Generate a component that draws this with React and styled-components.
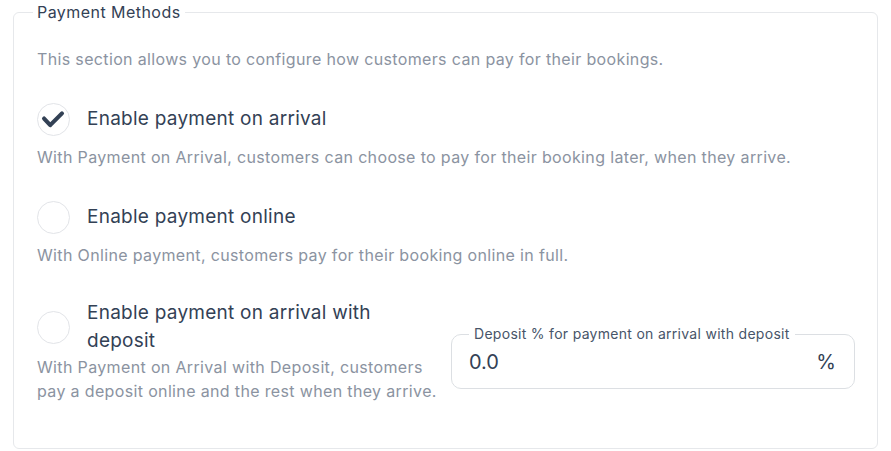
import React from "react";
import styled, { createGlobalStyle } from "styled-components";

const Global = createGlobalStyle`
  html, body { margin: 0; padding: 0; background: #ffffff; }
  body { font-family: Inter, "Noto Sans", sans-serif; color: #334155; }
  * { box-sizing: border-box; }
`;

const Page = styled.div`
  padding: 2px 13px 0;
`;

const Section = styled.fieldset`
  margin: 0;
  padding: 25px 22px 45px 23px;
  border: 1px solid #e6e8eb;
  border-radius: 6px;
  display: flex;
  flex-direction: column;
  gap: 22px;
  min-width: 0;
`;

const SectionLegend = styled.legend`
  font-size: 16px;
  line-height: 20px;
  letter-spacing: 0.45px;
  padding: 0 4px;
  margin-left: -4px;
  color: #334155;
`;

const Description = styled.p`
  margin: 0;
  font-size: 16px;
  line-height: 24px;
  letter-spacing: 0.35px;
  color: #8b93a1;
`;

const Group = styled.div`
  display: flex;
  flex-direction: column;
`;

const OptionRow = styled.label`
  display: flex;
  align-items: center;
  gap: 17px;
  min-height: 52px;
  cursor: pointer;
`;

const Circle = styled.span`
  flex: none;
  width: 33px;
  height: 33px;
  border-radius: 50%;
  border: 1px solid #e2e4e8;
  background: #fff;
  display: flex;
  align-items: center;
  justify-content: center;
`;

const OptionLabel = styled.span`
  font-size: 19px;
  line-height: 28px;
  letter-spacing: 0.25px;
  color: #334155;
  max-width: ${(p) => (p.$narrow ? "330px" : "none")};
`;

const SplitGroup = styled.div`
  display: grid;
  grid-template-columns: 1fr 1fr;
  column-gap: 10px;
  margin-top: 10px;
`;

const LeftCol = styled.div`
  display: flex;
  flex-direction: column;
`;

const Field = styled.fieldset`
  margin: 26px 0 0;
  padding: 0 18px 7px 17px;
  border: 1px solid #dcdfe3;
  border-radius: 10px;
  align-self: start;
  min-width: 0;
`;

const FieldLegend = styled.legend`
  font-size: 14px;
  line-height: 18px;
  letter-spacing: 0.29px;
  padding: 0 5px;
  color: #475569;
`;

const FieldRow = styled.div`
  display: flex;
  align-items: center;
  height: 38px;
`;

const ValueInput = styled.input`
  flex: 1;
  min-width: 0;
  border: none;
  outline: none;
  background: transparent;
  padding: 0;
  font-family: Inter, "Noto Sans", sans-serif;
  font-size: 20px;
  color: #334155;
`;

const Suffix = styled.span`
  font-size: 20px;
  color: #334155;
`;

function Check() {
  return (
    <svg width="33" height="33" viewBox="0 0 33 33" fill="none">
      <path
        d="M6.5 15.5 L13 22.5 L25.5 10"
        stroke="#334155"
        strokeWidth="4.4"
        strokeLinecap="round"
        strokeLinejoin="round"
      />
    </svg>
  );
}

function Option({ checked, narrow, children }) {
  return (
    <OptionRow>
      <Circle>{checked && <Check />}</Circle>
      <OptionLabel $narrow={narrow}>{children}</OptionLabel>
    </OptionRow>
  );
}

export default function App() {
  return (
    <Page>
      <Global />
      <Section>
        <SectionLegend>Payment Methods</SectionLegend>
        <Description>
          This section allows you to configure how customers can pay for their bookings.
        </Description>
        <Group>
          <Option checked>Enable payment on arrival</Option>
          <Description>
            With Payment on Arrival, customers can choose to pay for their booking later, when they arrive.
          </Description>
        </Group>
        <Group>
          <Option>Enable payment online</Option>
          <Description>
            With Online payment, customers pay for their booking online in full.
          </Description>
        </Group>
        <SplitGroup>
          <LeftCol>
            <Option narrow>Enable payment on arrival with deposit</Option>
            <Description>
              With Payment on Arrival with Deposit, customers pay a deposit online and the rest when they arrive.
            </Description>
          </LeftCol>
          <Field>
            <FieldLegend>Deposit % for payment on arrival with deposit</FieldLegend>
            <FieldRow>
              <ValueInput defaultValue="0.0" />
              <Suffix>%</Suffix>
            </FieldRow>
          </Field>
        </SplitGroup>
      </Section>
    </Page>
  );
}
